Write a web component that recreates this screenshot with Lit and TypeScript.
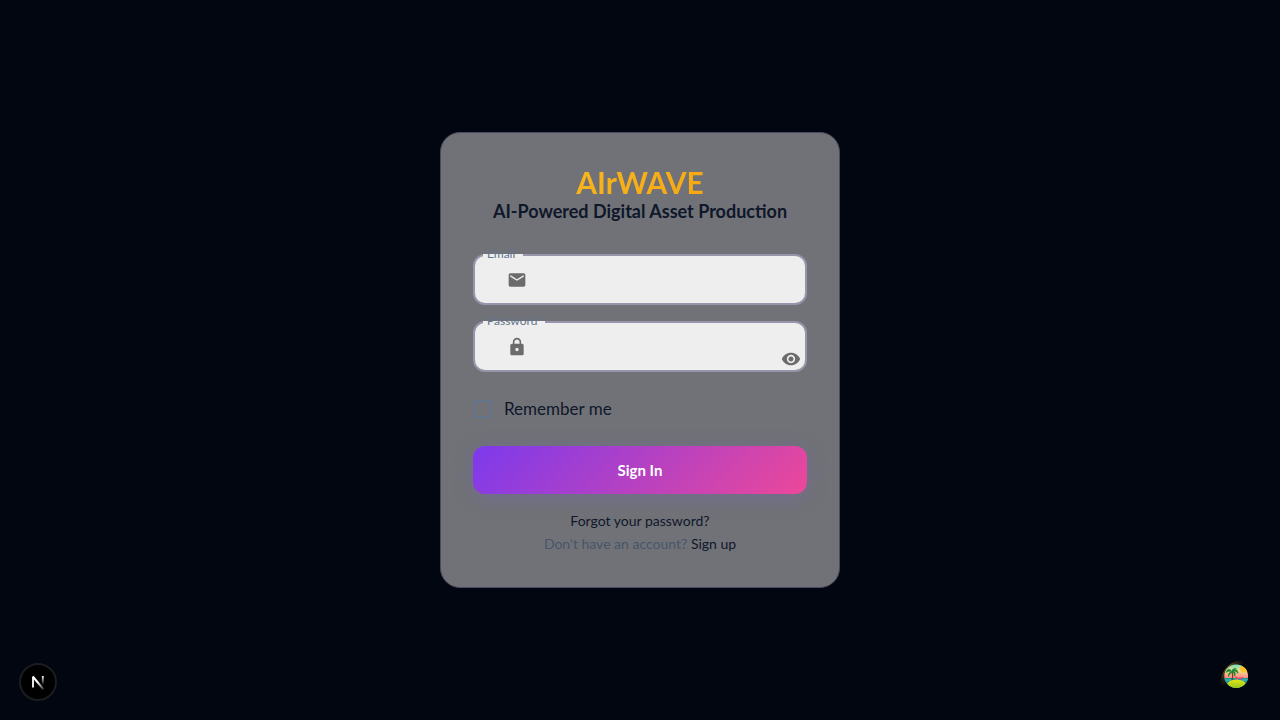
import { LitElement, html, css, svg } from "lit";
import { customElement, state } from "lit/decorators.js";

const icons = {
  mail: svg`<path d="M20 4H4c-1.100 0-1.990.9-1.990 2L2 18c0 1.100.9 2 2 2h16c1.100 0 2-.9 2-2V6c0-1.100-.9-2-2-2m0 4-8 5-8-5V6l8 5 8-5z"/>`,
  lock: svg`<path d="M18 8h-1V6c0-2.760-2.240-5-5-5S7 3.240 7 6v2H6c-1.100 0-2 .9-2 2v10c0 1.100.9 2 2 2h12c1.100 0 2-.9 2-2V10c0-1.100-.9-2-2-2m-6 9c-1.100 0-2-.9-2-2s.9-2 2-2 2 .9 2 2-.9 2-2 2m3.100-9H8.900V6c0-1.710 1.390-3.100 3.100-3.100s3.100 1.390 3.100 3.100z"/>`,
  eye: svg`<path d="M12 4.500C7 4.500 2.730 7.610 1 12c1.730 4.390 6 7.500 11 7.500s9.270-3.110 11-7.500c-1.730-4.390-6-7.500-11-7.500M12 17c-2.760 0-5-2.240-5-5s2.240-5 5-5 5 2.240 5 5-2.240 5-5 5m0-8c-1.660 0-3 1.340-3 3s1.340 3 3 3 3-1.340 3-3-1.340-3-3-3"/>`,
};

@customElement("app-root")
export class AppRoot extends LitElement {
  @state() private showPassword = false;

  static styles = css`
    :host {
      display: block;
      font-family: Lato, "Open Sans", sans-serif;
      color: #0f172a;
    }
    * { box-sizing: border-box; }
    .page {
      min-height: 100vh;
      display: flex;
      align-items: center;
      justify-content: center;
      background: #020610;
    }
    .card {
      width: 100%;
      max-width: 400px;
      padding: 32px;
      border: 1px solid #4b4a60;
      border-radius: 20px;
      background: #717277;
    }
    .head { text-align: center; margin-bottom: 32px; }
    h1 {
      margin: 0;
      font-size: 30px;
      line-height: 35px;
      font-weight: 700;
      background: linear-gradient(135deg, #fbbf24, #f59e0b);
      background-clip: text;
      -webkit-background-clip: text;
      color: transparent;
    }
    h2 { margin: 0; font-size: 18px; line-height: 22px; font-weight: 700; }
    form { display: flex; flex-direction: column; }
    .field {
      position: relative;
      display: flex;
      align-items: center;
      height: 51px;
      margin-bottom: 16px;
      padding-left: 32px;
      border: 2px solid #9695ab;
      border-radius: 12px;
      background: #eee;
    }
    .field label {
      position: absolute;
      z-index: 0;
      top: -10px;
      left: 8px;
      padding: 0 8px 0 4px;
      font-size: 12px;
      line-height: 16px;
      color: #64748b;
    }
    .field label::before {
      content: "";
      position: absolute;
      z-index: -1;
      left: 0;
      right: 0;
      top: 8px;
      height: 4px;
      background: #eee;
    }
    .icon { width: 20px; height: 20px; fill: #6b6b6b; flex: none; display: block; }
    .field input {
      flex: 1;
      min-width: 0;
      height: 100%;
      margin-left: 12px;
      border: 0;
      outline: 0;
      background: transparent;
      font: inherit;
      font-size: 16px;
      color: inherit;
    }
    .toggle {
      align-self: flex-end;
      margin: 0 4px 1px 0;
      padding: 0;
      border: 0;
      background: none;
      cursor: pointer;
    }
    .remember {
      display: flex;
      align-items: center;
      gap: 12px;
      margin: 8px 0 24px;
      padding-left: 1px;
      font-size: 17px;
      line-height: 26px;
    }
    .remember input {
      appearance: none;
      width: 18px;
      height: 18px;
      margin: 0;
      border: 2px solid #64748b;
      border-radius: 2px;
    }
    .remember input:checked { background: #7c3aed; }
    .submit {
      height: 48px;
      border: 0;
      border-radius: 12px;
      background: linear-gradient(135deg, #7c3aed, #ec4899);
      box-shadow: 0 4px 20px rgba(115, 95, 205, 0.3);
      color: #fff;
      font: inherit;
      font-size: 15px;
      font-weight: 700;
      cursor: pointer;
    }
    .links {
      margin-top: 15px;
      text-align: center;
      font-size: 14px;
      line-height: 23px;
      color: #475569;
    }
    .links p { margin: 0; }
    .links a { color: #0f172a; text-decoration: none; }
    .badge {
      position: fixed;
      left: 19px;
      bottom: 19px;
      width: 38px;
      height: 38px;
      padding: 0;
      border: 2px solid #1c1d20;
      border-radius: 50%;
      background: #000;
    }
    .badge svg { display: block; width: 34px; height: 34px; }
    .island {
      position: fixed;
      right: 28px;
      bottom: 28px;
      width: 32px;
      height: 32px;
      padding: 0;
      border: 0;
      background: none;
    }
    .island svg { display: block; width: 32px; height: 32px; }
  `;

  render() {
    return html`
      <main class="page">
        <section class="card">
          <header class="head">
            <h1>AIrWAVE</h1>
            <h2>AI-Powered Digital Asset Production</h2>
          </header>
          <form @submit=${(e: Event) => e.preventDefault()}>
            <div class="field">
              <label for="email">Email</label>
              <svg class="icon" viewBox="0 0 24 24">${icons.mail}</svg>
              <input id="email" type="email" autocomplete="email" />
            </div>
            <div class="field">
              <label for="password">Password</label>
              <svg class="icon" viewBox="0 0 24 24">${icons.lock}</svg>
              <input id="password" type=${this.showPassword ? "text" : "password"} />
              <button class="toggle" type="button" aria-label="Toggle password visibility"
                @click=${() => (this.showPassword = !this.showPassword)}>
                <svg class="icon" viewBox="0 0 24 24">${icons.eye}</svg>
              </button>
            </div>
            <label class="remember"><input type="checkbox" />Remember me</label>
            <button class="submit" type="submit">Sign In</button>
          </form>
          <div class="links">
            <p><a href="#forgot">Forgot your password?</a></p>
            <p>Don't have an account? <a href="#signup">Sign up</a></p>
          </div>
        </section>
      </main>
      <button class="badge" type="button" aria-label="Development tools">
        <svg viewBox="0 0 34 34" fill="none">
          <defs>
            <linearGradient id="fade" x1="0" y1="11" x2="0" y2="20" gradientUnits="userSpaceOnUse">
              <stop stop-color="#fff"/><stop offset="1" stop-color="#fff" stop-opacity="0"/>
            </linearGradient>
            <linearGradient id="diag" x1="17" y1="17" x2="23" y2="25" gradientUnits="userSpaceOnUse">
              <stop stop-color="#fff"/><stop offset="1" stop-color="#fff" stop-opacity="0.1"/>
            </linearGradient>
          </defs>
          <path d="M12 22.500V11.800" stroke="#fff" stroke-width="1.800"/>
          <path d="M11.800 11.500L22.500 24.300" stroke="url(#diag)" stroke-width="2"/>
          <path d="M21.800 11v9.500" stroke="url(#fade)" stroke-width="1.800"/>
        </svg>
      </button>
      <button class="island" type="button" aria-label="Query tools">
        <svg viewBox="0 0 32 32">
          <defs>
            <linearGradient id="sky" x1="0" y1="0" x2="0" y2="1">
              <stop offset=".05" stop-color="#7fe0b8"/><stop offset=".28" stop-color="#f8df8c"/><stop offset=".52" stop-color="#ff9184"/>
            </linearGradient>
            <linearGradient id="arc" x1="24" y1="2" x2="1" y2="27" gradientUnits="userSpaceOnUse">
              <stop stop-color="#5d431d" stop-opacity="0"/><stop offset=".4" stop-color="#765424"/><stop offset=".65" stop-color="#4b4019"/><stop offset="1" stop-color="#1d210b" stop-opacity="0"/>
            </linearGradient>
            <linearGradient id="hill" x1="0" y1="0" x2="0" y2="1">
              <stop stop-color="#dfe51a"/><stop offset="1" stop-color="#83bf17"/>
            </linearGradient>
            <clipPath id="disc"><circle cx="16.200" cy="16.200" r="11.800"/></clipPath>
          </defs>
          <path d="M25 0C10 0 0 10 0 27H5C4 14 12 4 25 4Z" fill="url(#arc)"/>
          <g clip-path="url(#disc)">
            <rect x="4" y="4" width="25" height="25" fill="url(#sky)"/>
            <circle cx="24" cy="8.500" r="4" fill="#ffc229"/>
            <rect x="4" y="18" width="25" height="11" fill="#14999b"/>
            <path d="M5 20h6M22 20h6" stroke="#42c5bd" stroke-width="1"/>
            <path d="M12 20.500c1-3 1-6 0-9" stroke="#75431e" stroke-width="1.300" fill="none"/>
            <path d="M12 11.500C9 7.500 7 9.500 6 12.500c2-1.300 4-1.300 6-1-3 .8-4 2.500-3.500 5 1-2 2-3 3.500-4.500 2 1 2.500 2 2.500 4 1.500-2 1-4-1.500-4.700 2.500-.3 3.700.2 5 2.200.5-3.200-2.500-5-5-3 1-1.200 2-1.500 3.500-1.500-2-1.500-4.500 0-4.500 2.500Z" fill="#178537" stroke="#178537" stroke-width=".5"/>
            <path d="m15 16.500 3 2 5-1M17 20v-2m4 2v-2" stroke="#e8437b" stroke-width="1.100" fill="none"/>
            <ellipse cx="16.500" cy="25" rx="9.500" ry="5.500" fill="url(#hill)"/>
          </g>
        </svg>
      </button>
    `;
  }
}
